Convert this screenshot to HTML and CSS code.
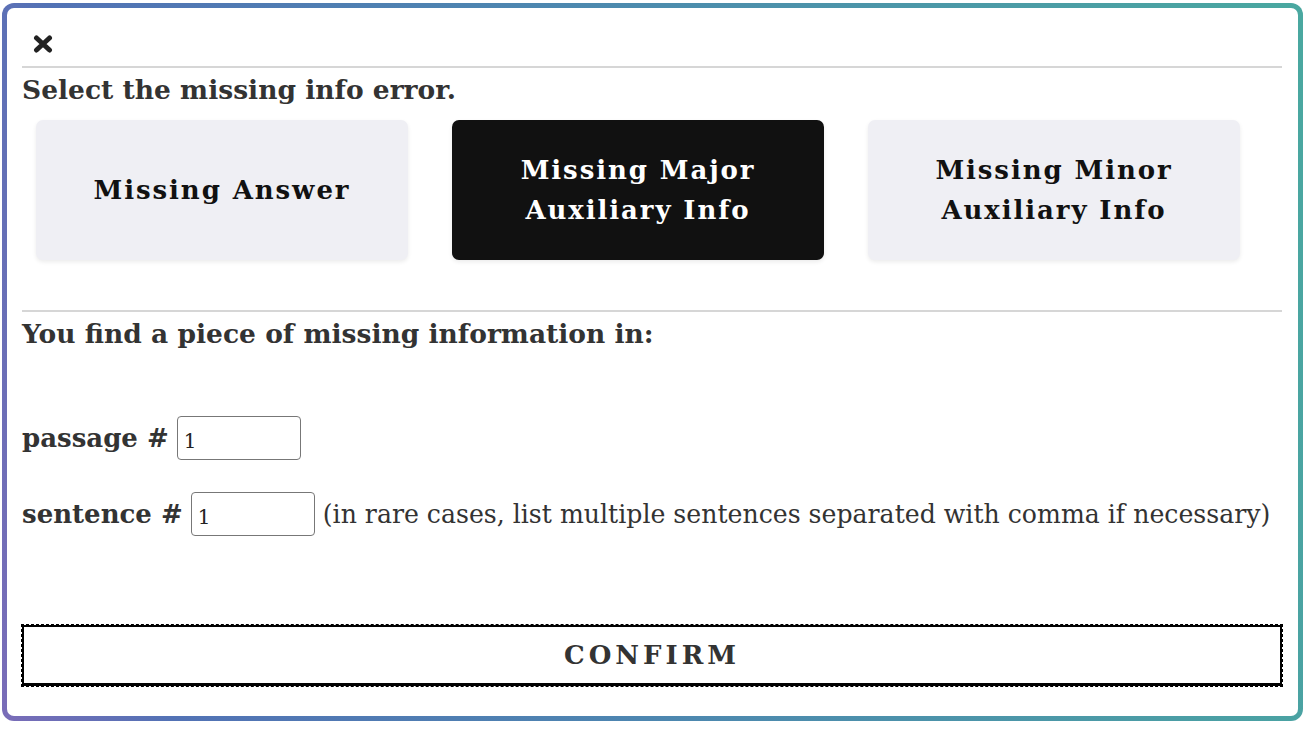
FILE: index.html
```html
<!DOCTYPE html>
<html>
<head>
<meta charset="utf-8">
<link rel="stylesheet" href="styles.css">
</head>
<body>
<div class="frame">
  <div class="close-row">
    <svg class="close" width="20" height="18" viewBox="0 0 20 18"><path d="M3.5 3 L16.5 15 M16.5 3 L3.5 15" stroke="#222" stroke-width="5" stroke-linecap="round"/></svg>
  </div>
  <div class="rule"></div>
  <h2 class="heading">Select the missing info error.</h2>
  <div class="choices">
    <div class="choice">Missing Answer</div>
    <div class="choice selected">Missing Major<br>Auxiliary Info</div>
    <div class="choice">Missing Minor<br>Auxiliary Info</div>
  </div>
  <div class="rule rule-2"></div>
  <h2 class="heading">You find a piece of missing information in:</h2>
  <div class="field field-first">
    <span class="label">passage #</span>
    <input class="num" type="text" value="1">
  </div>
  <div class="field">
    <span class="label">sentence #</span>
    <input class="num" type="text" value="1">
    <span class="note">(in rare cases, list multiple sentences separated with comma if necessary)</span>
  </div>
  <button class="confirm">CONFIRM</button>
</div>
</body>
</html>
```

FILE: styles.css
```css
html, body {
  margin: 0;
  padding: 0;
  background: #fff;
}
body {
  font-family: "DejaVu Serif", Georgia, serif;
  color: #333;
}
.frame {
  margin: 3px 9px 0 2px;
  height: 718px;
  box-sizing: border-box;
  border: 5px solid transparent;
  border-radius: 12px;
  background: linear-gradient(#fff, #fff) padding-box,
              linear-gradient(80deg, #7a6cb8 0%, #5272b5 12%, #4d86b0 45%, #4aa8a0 100%) border-box;
  padding: 27px 16px 0 15px;
}
.close-row {
  height: 18px;
  padding-left: 11px;
  margin-bottom: 13px;
}
.close {
  display: block;
}
.rule {
  height: 2px;
  background: #d6d6d6;
}
.heading {
  margin: 0;
  font-size: 26.5px;
  font-weight: bold;
  line-height: 44px;
}
.choices {
  display: flex;
  gap: 44px;
  padding-left: 14px;
  margin-top: 8px;
}
.choice {
  width: 372px;
  height: 140px;
  box-sizing: border-box;
  background: #efeff4;
  border-radius: 7px;
  box-shadow: 0 2px 4px rgba(0,0,0,0.08);
  display: flex;
  align-items: center;
  justify-content: center;
  text-align: center;
  font-size: 26px;
  font-weight: bold;
  letter-spacing: 1.9px;
  line-height: 40px;
  color: #111;
}
.choice.selected {
  background: #111;
  color: #fff;
}
.rule-2 {
  margin-top: 50px;
}
.field {
  display: flex;
  align-items: center;
  gap: 8px;
  margin-top: 32px;
  font-size: 26px;
}
.field-first {
  margin-top: 60px;
}
.label {
  font-weight: bold;
}
.num {
  width: 124px;
  height: 44px;
  box-sizing: border-box;
  border: 1.5px solid #777;
  border-radius: 4px;
  padding: 6px 6px 0;
  font-family: "DejaVu Serif", Georgia, serif;
  font-size: 20px;
  color: #222;
  background: #fff;
}
.note {
  font-weight: normal;
  font-size: 25.2px;
}
.confirm {
  display: block;
  width: 100%;
  height: 61px;
  margin-top: 89px;
  border: 2px solid #000;
  border-bottom-width: 3px;
  outline: 1px dashed #000;
  outline-offset: 0;
  background: #fff;
  font-family: "DejaVu Serif", Georgia, serif;
  font-size: 26px;
  font-weight: bold;
  letter-spacing: 4px;
  color: #333;
}
```
